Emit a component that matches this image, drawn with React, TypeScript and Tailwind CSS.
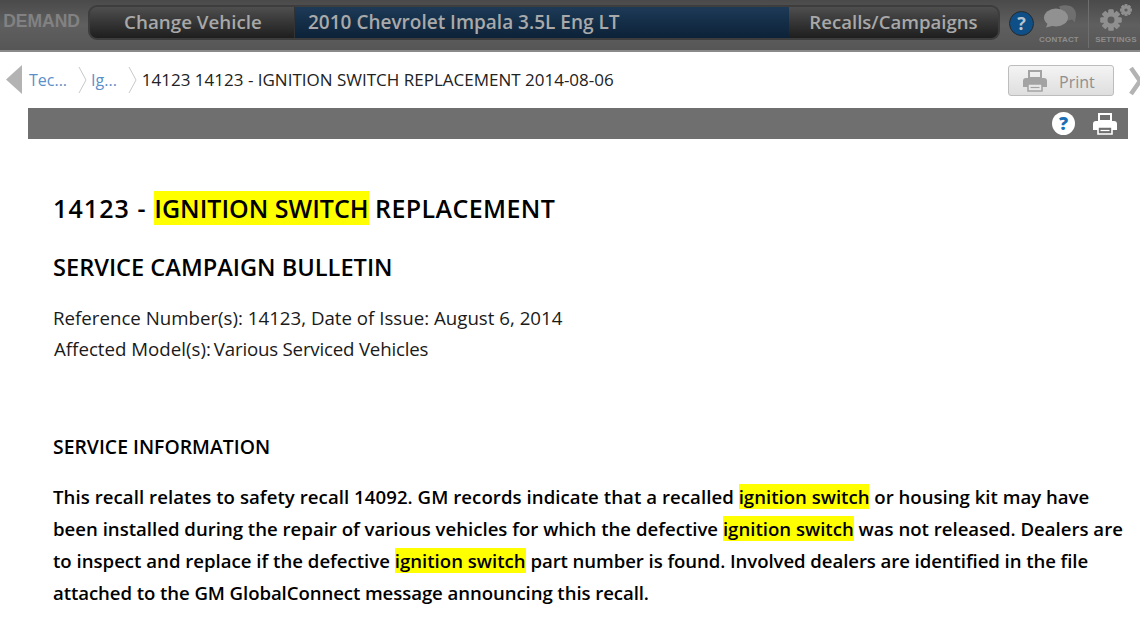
import React from "react";

const Hl = ({ children }: { children: React.ReactNode }) => (
  <span className="bg-[#ffff00]">{children}</span>
);

const PrinterIcon = ({ body, paper, className }: { body: string; paper: string; className?: string }) => (
  <svg viewBox="0 0 24 22" className={className}>
    <path d="M6 1h12v7H6z" fill="none" stroke={body} strokeWidth="2" />
    <path d="M3 8h18a3 3 0 0 1 3 3v6H0v-6a3 3 0 0 1 3-3z" fill={body} />
    <path d="M5 14h14v7H5z" fill={paper} stroke={body} strokeWidth="1.6" />
    <path d="M7.5 17.5h9" stroke={body} strokeWidth="1.2" />
  </svg>
);

const Gear = ({ size, hole, fill }: { size: number; hole: number; fill: string }) => {
  const teeth = [0, 45, 90, 135, 180, 225, 270, 315];
  return (
    <svg width={size} height={size} viewBox="0 0 24 24">
      {teeth.map((a) => (
        <rect key={a} x="9.2" y="0.5" width="5.6" height="23" rx="1" fill={fill} transform={`rotate(${a} 12 12)`} />
      ))}
      <circle cx="12" cy="12" r="8.6" fill={fill} />
      <circle cx="12" cy="12" r={hole} fill="#5c5c5c" />
    </svg>
  );
};

export default function App() {
  return (
    <div className="w-[1140px] h-[628px] overflow-hidden bg-white font-['Open_Sans',sans-serif]">
      <header className="h-[52px] flex items-start border-b-2 border-[#8a8a8a] bg-gradient-to-b from-[#4a4a4a] via-[#5f5f5f] to-[#565656]">
        <div className="w-[88px] h-[50px] flex items-center justify-end pr-[8px] pb-[8px] font-['Liberation_Sans',sans-serif] font-bold text-[17.5px] text-[#828282]">
          DEMAND
        </div>
        <div className="mt-[5px] w-[912px] h-[35px] p-[2px] rounded-[9px] bg-[#3d3d3d] flex">
          <div className="w-[205px] pl-[2px] flex items-center justify-center rounded-l-[7px] bg-gradient-to-b from-[#4f4f4f] to-[#1e1e1e] text-[#a8a8a8] text-[18.8px] font-semibold border-r border-[#333]">
            Change Vehicle
          </div>
          <div className="flex-1 flex items-center pl-[13px] bg-gradient-to-b from-[#1d3a57] to-[#0c2238] text-[#a9a9a9] text-[19px] font-semibold">
            2010 Chevrolet Impala 3.5L Eng LT
          </div>
          <div className="w-[209px] pb-[2px] flex items-center justify-center rounded-r-[7px] bg-gradient-to-b from-[#4f4f4f] to-[#1e1e1e] text-[#a8a8a8] text-[18.6px] font-semibold">
            Recalls/Campaigns
          </div>
        </div>
        <div className="ml-[9px] mt-[11px] w-[25px] h-[25px] shrink-0 rounded-full bg-[#0d4f86] border border-[#2a2a2a] flex items-center justify-center text-[#b9c4cf] text-[18px] font-bold">
          ?
        </div>
        <div className="w-[54px] h-[48px] flex flex-col items-center pt-[5px]">
          <svg width="36" height="25" viewBox="0 0 36 24">
            <path d="M16 1c8-3 17 0 17 8 0 3-1 5-1 8l-3-3c-2 1-4 1-6 1z" fill="#6f6f6f" />
            <ellipse cx="13" cy="12" rx="12" ry="9" fill="#919191" />
            <path d="M5 17l-2 5 8-2z" fill="#919191" />
          </svg>
          <span className="-ml-[4px] font-['Liberation_Sans',sans-serif] font-bold text-[8px] leading-[10px] mt-[5px] text-[#8e8e8e] tracking-[0.2px]">
            CONTACT
          </span>
        </div>
        <div className="w-px h-[48px] bg-[#6e6e6e]" />
        <div className="flex-1 h-[48px] flex flex-col items-center pt-[9px] pl-[3px]">
          <div className="flex items-start">
            <Gear size={22} hole={3.8} fill="#8f8f8f" />
            <div className="-ml-[2px] -mt-[5px]">
              <Gear size={12} hole={3.2} fill="#8f8f8f" />
            </div>
          </div>
          <span className="font-['Liberation_Sans',sans-serif] font-bold text-[8px] leading-[10px] mt-[4px] text-[#8e8e8e] tracking-[0.2px]">
            SETTINGS
          </span>
        </div>
      </header>

      <nav className="h-[56px] flex items-start relative">
        <svg width="16" height="30" viewBox="0 0 16 30" className="ml-[6px] mt-[13px] shrink-0">
          <path d="M16 0v29L0 14.5z" fill="#b3b3b3" />
        </svg>
        <div className="ml-[7px] mt-[14px] flex items-center text-[16px] leading-[24px] text-[#222]">
          <span className="text-[#5b8fc7]">Tec...</span>
          <svg width="10" height="28" viewBox="0 0 10 28" className="ml-[11px] mr-[3px]">
            <path d="M1 1l7 13-7 13" fill="none" stroke="#c9c9c9" strokeWidth="1" />
          </svg>
          <span className="text-[#5b8fc7]">Ig...</span>
          <svg width="10" height="28" viewBox="0 0 10 28" className="ml-[11px] mr-[4px]">
            <path d="M1 1l7 13-7 13" fill="none" stroke="#c9c9c9" strokeWidth="1" />
          </svg>
          <span className="text-[17px]">14123 14123 - IGNITION SWITCH REPLACEMENT 2014-08-06</span>
        </div>
        <div className="ml-auto mt-[13px] mr-[26px] w-[106px] h-[31px] border border-[#bdbdbd] rounded-[3px] bg-gradient-to-b from-[#f4f4f4] to-[#dedede] flex items-center">
          <PrinterIcon body="#a3a3a3" paper="#e8e8e8" className="ml-[14px] w-[24px] h-[22px]" />
          <span className="ml-[12px] pt-[3px] text-[16px] text-[#8f8f8f]">Print</span>
        </div>
        <svg width="11" height="30" viewBox="0 0 11 30" className="absolute left-[1129px] top-[14px]">
          <path d="M2 2l9 13L2 28" fill="none" stroke="#b3b3b3" strokeWidth="4.5" />
        </svg>
      </nav>

      <div className="ml-[28px] w-[1100px] h-[31px] bg-[#6f6f6f] flex items-center justify-end pr-[11px]">
        <div className="w-[23px] h-[23px] rounded-full bg-white flex items-center justify-center text-[#1a6fb5] text-[18px] font-extrabold">
          ?
        </div>
        <PrinterIcon body="#ffffff" paper="#6f6f6f" className="ml-[18px] w-[24px] h-[22px]" />
      </div>

      <main className="pl-[53px] pr-[10px] text-black">
        <h1 className="mt-[51px] text-[25px] leading-[36px] font-semibold">
          <span className="tracking-[1.1px]">14123 - </span>
          <Hl>IGNITION SWITCH</Hl> <span className="tracking-[0.4px]">REPLACEMENT</span>
        </h1>
        <h2 className="mt-[27px] text-[23.6px] leading-[28px] font-semibold">SERVICE CAMPAIGN BULLETIN</h2>
        <p className="mt-[21px] text-[18.7px] leading-[31px] text-[#1a1a1a]">Reference Number(s): 14123, Date of Issue: August 6, 2014</p>
        <p className="pl-px text-[18.7px] leading-[31px] text-[#1a1a1a] flex gap-[3px]">
          <span>Affected Model(s):</span>
          <span className="tracking-[-0.2px]">Various Serviced Vehicles</span>
        </p>
        <h3 className="mt-[70px] text-[19.4px] leading-[26px] font-semibold">SERVICE INFORMATION</h3>
        <p className="mt-[21px] text-[18.6px] leading-[32px] font-semibold">
          <span className="tracking-[0.06px]">This recall relates to safety recall 14092. GM records indicate that a recalled</span> <Hl>ignition switch</Hl> or housing kit may have been installed during the repair of various vehicles for which the defective <Hl>ignition switch</Hl> was not released. Dealers are to inspect and replace if the defective <Hl>ignition switch</Hl> <span className="tracking-[-0.08px]">part number is found. Involved dealers are identified in the file attached to the GM GlobalConnect message announcing this recall.</span>
        </p>
      </main>
    </div>
  );
}
